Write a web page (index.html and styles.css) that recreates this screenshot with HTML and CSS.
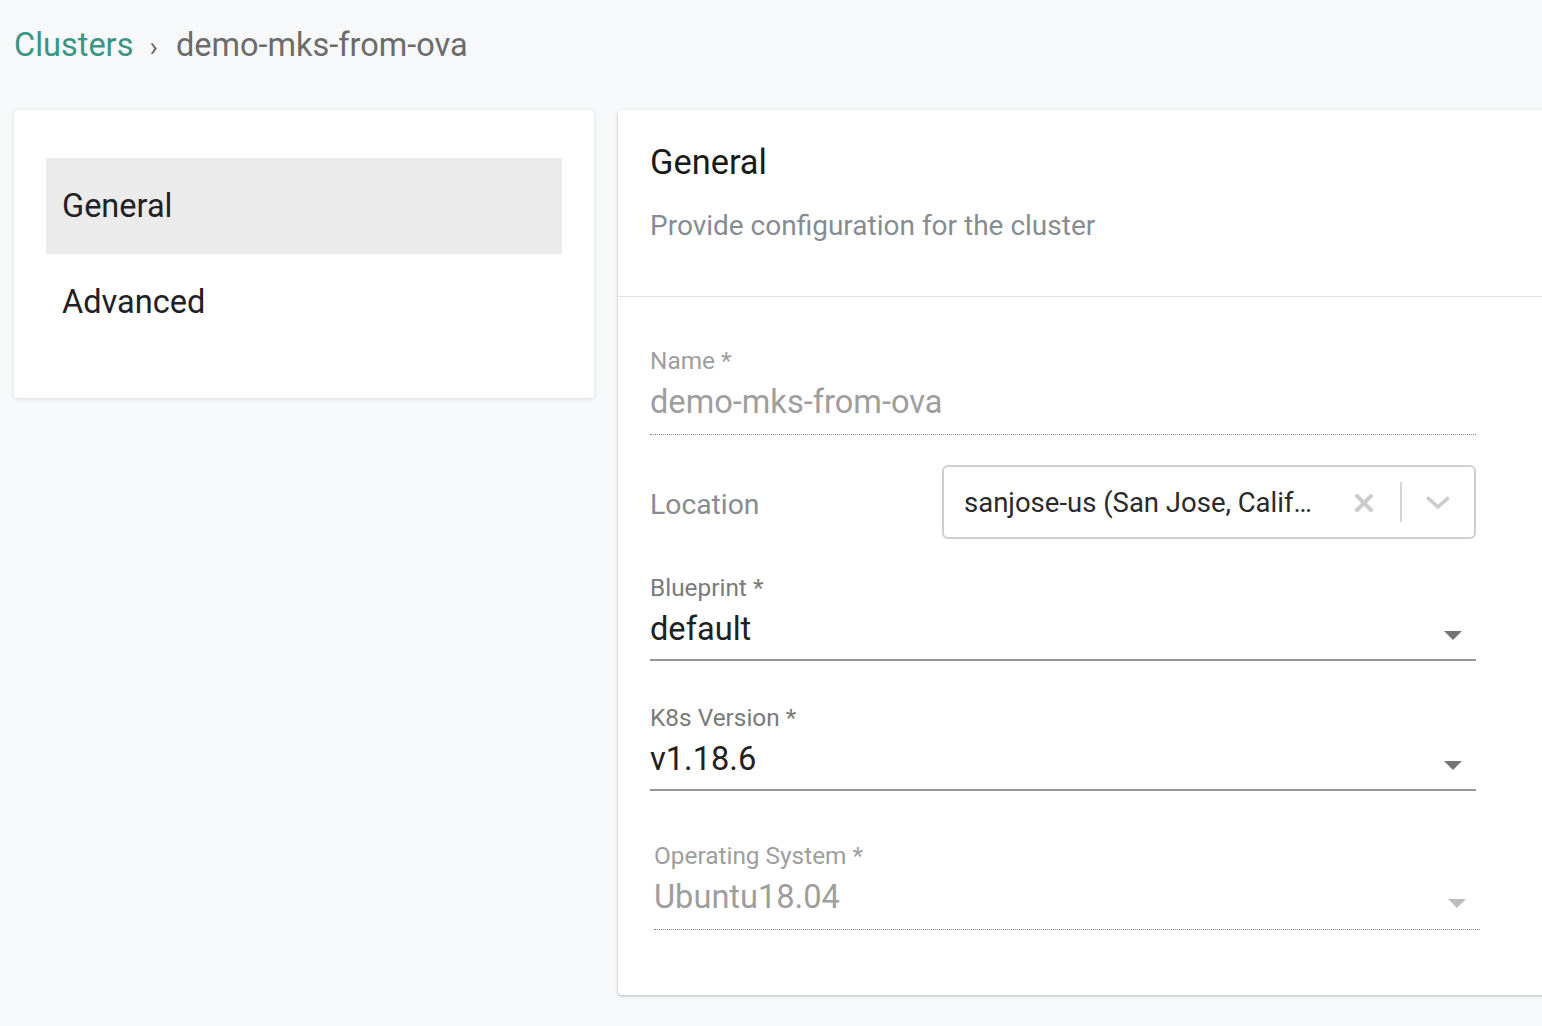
FILE: index.html
```html
<!DOCTYPE html>
<html lang="en">
<head>
<meta charset="utf-8">
<title>demo-mks-from-ova</title>
<link rel="stylesheet" href="styles.css">
</head>
<body>
<div class="page">
  <nav class="crumbs">
    <a class="crumb-link" href="#">Clusters</a>
    <span class="crumb-sep">›</span>
    <span class="crumb-current">demo-mks-from-ova</span>
  </nav>
  <div class="main">
    <aside class="side-card">
      <div class="side-item active">General</div>
      <div class="side-item">Advanced</div>
    </aside>
    <section class="form-card">
      <header class="form-head">
        <h1 class="form-title">General</h1>
        <p class="form-sub">Provide configuration for the cluster</p>
      </header>
      <div class="form-body">
        <div class="field disabled">
          <div class="label">Name *</div>
          <div class="value dotted">demo-mks-from-ova</div>
        </div>
        <div class="loc-row">
          <div class="loc-label">Location</div>
          <div class="loc-select">
            <span class="loc-text">sanjose-us (San Jose, Calif…</span>
            <span class="loc-icons">
              <svg class="ico-x" width="20" height="20" viewBox="0 0 20 20"><path d="M3 3 L17 17 M17 3 L3 17" stroke="#cccccc" stroke-width="4" stroke-linecap="round" fill="none"/></svg>
              <span class="loc-sep"></span>
              <svg class="ico-chev" width="24" height="14" viewBox="0 0 24 14"><path d="M2.5 2.5 L12 11 L21.5 2.5" stroke="#cccccc" stroke-width="3.6" stroke-linecap="round" stroke-linejoin="round" fill="none"/></svg>
            </span>
          </div>
        </div>
        <div class="field sel bp">
          <div class="label">Blueprint *</div>
          <div class="value solid">default<span class="tri"></span></div>
        </div>
        <div class="field sel k8s">
          <div class="label">K8s Version *</div>
          <div class="value solid">v1.18.6<span class="tri"></span></div>
        </div>
        <div class="field sel os disabled">
          <div class="label">Operating System *</div>
          <div class="value dotted">Ubuntu18.04<span class="tri light"></span></div>
        </div>
      </div>
    </section>
  </div>
</div>
</body>
</html>
```

FILE: styles.css
```css
* { box-sizing: border-box; }
html, body {
  margin: 0;
  padding: 0;
  background: #f7f8fa;
  overflow: hidden;
  font-family: Roboto, "Noto Sans", "Liberation Sans", sans-serif;
}
.page {
  width: 1542px;
  height: 1026px;
  padding-left: 14px;
}
.crumbs {
  padding-top: 26px;
  height: 110px;
  font-size: 32.5px;
  line-height: 38px;
  color: #6b6b6b;
  white-space: nowrap;
}
.crumb-link {
  color: #3a9585;
  text-decoration: none;
}
.crumb-sep {
  display: inline-block;
  margin: 0 10px 0 8px;
  font-size: 28px;
  color: #6b6b6b;
}
.main {
  display: flex;
  align-items: flex-start;
  gap: 24px;
}
.side-card {
  width: 580px;
  flex: none;
  background: #fff;
  border-radius: 4px;
  box-shadow: 0 1px 4px rgba(0,0,0,0.12);
  padding: 48px 32px;
}
.side-item {
  height: 96px;
  line-height: 96px;
  padding-left: 16px;
  font-size: 32.5px;
  color: #1f2126;
}
.side-item.active { background: #ebebeb; }
.form-card {
  width: 940px;
  flex: none;
  background: #fff;
  border-radius: 4px 0 0 4px;
  box-shadow: 0 1px 3px rgba(0,0,0,0.28);
  height: 885px;
}
.form-head {
  padding: 32px 32px 52px;
  border-bottom: 1px solid #e3e3e3;
}
.form-title {
  margin: 0;
  font-size: 34.4px;
  line-height: 40px;
  font-weight: 400;
  color: #1a1a1a;
}
.form-sub {
  margin: 26px 0 0;
  font-size: 28px;
  line-height: 36px;
  color: #878c93;
}
.form-body {
  padding: 50px 32px 0;
  width: 890px;
}
.field { width: 826px; }
.label {
  font-size: 24.4px;
  line-height: 28px;
  color: #7a7a7a;
}
.value {
  position: relative;
  margin-top: 9px;
  font-size: 32.6px;
  line-height: 36px;
  color: #212121;
  padding-bottom: 14px;
}
.value.dotted { border-bottom: 1.5px dotted #8a8a8a; }
.value.solid {
  border-bottom: 2px solid #969696;
  padding-bottom: 12px;
}
.field.disabled .label,
.field.disabled .value { color: #9e9e9e; }
.tri {
  position: absolute;
  right: 14px;
  top: 20px;
  width: 0;
  height: 0;
  border-left: 9px solid transparent;
  border-right: 9px solid transparent;
  border-top: 9px solid #757575;
}
.tri.light { border-top-color: #bdbdbd; }
.loc-row {
  width: 826px;
  display: flex;
  align-items: center;
  margin-top: 30px;
}
.loc-label {
  width: 292px;
  flex: none;
  font-size: 28.3px;
  color: #878c93;
  padding-top: 4px;
}
.loc-select {
  width: 534px;
  height: 74px;
  flex: none;
  border: 2px solid #cfcfcf;
  border-radius: 6px;
  display: flex;
  align-items: center;
  padding-left: 20px;
}
.loc-text {
  flex: 1;
  font-size: 27.5px;
  color: #2a2a2a;
  white-space: nowrap;
}
.loc-icons {
  display: flex;
  align-items: center;
}
.ico-x { margin-right: 26px; margin-top: 2px; }
.loc-sep {
  width: 2px;
  height: 40px;
  background: #d4d4d4;
  margin-right: 24px;
}
.ico-chev { margin-right: 24px; margin-top: 2px; }
.bp { margin-top: 35px; }
.k8s { margin-top: 43px; }
.os { margin-top: 51px; margin-left: 4px; }
```
